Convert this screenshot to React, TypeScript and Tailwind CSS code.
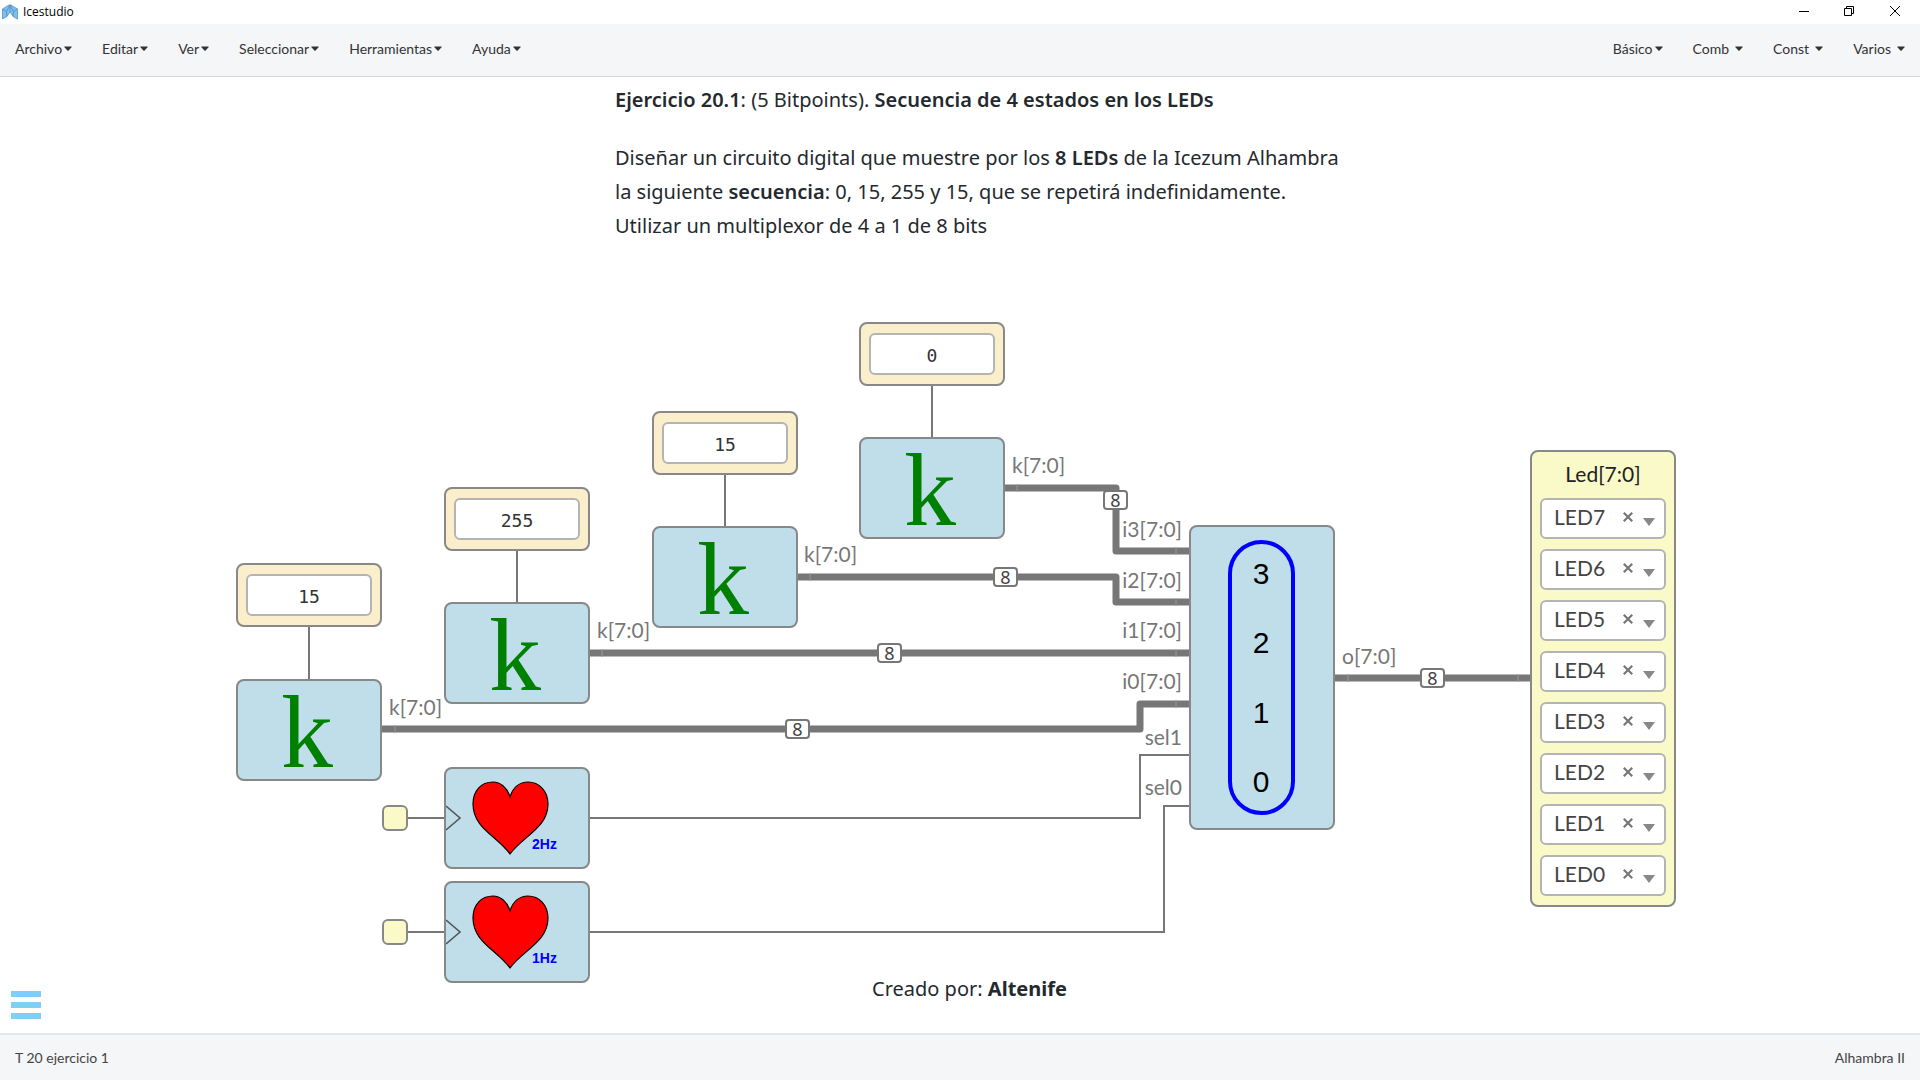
import React from "react";

const wireColor = "#777777";

function Caret({ spaced = false }: { spaced?: boolean }) {
  return (
    <svg viewBox="0 0 8 5" className={spaced ? "ml-[6px] h-[5px] w-2" : "ml-[2px] h-[5px] w-2"} aria-hidden="true">
      <path d="M0.6 0.4h6.8q0.6 0.2 0.2 0.8L4.6 4.5q-0.6 0.5-1.2 0L0.4 1.2q-0.4-0.6 0.2-0.8z" fill="#333" />
    </svg>
  );
}

function MenuButton({ label, spaced }: { label: string; spaced?: boolean }) {
  return (
    <button type="button" className="flex h-full items-center px-[15px] text-sm text-[#333]">
      {label}
      <Caret spaced={spaced} />
    </button>
  );
}

function Logo() {
  return (
    <svg viewBox="0 0 16 16" className="h-4 w-4" aria-hidden="true">
      <path d="M0.5 5 7 1h2l6.5 4v10L11 12.4 8 7.8 5 12.4 0.5 15z" fill="#7cc0ee" stroke="#5a94bd" strokeWidth="0.8" strokeLinejoin="round" />
      <path d="M8 1v7M0.5 5 4.5 7.6 5 12.4M15.5 5 11.5 7.6 11 12.4M4.5 7.6 8 1l3.5 6.6" fill="none" stroke="#4a86b4" strokeWidth="0.7" />
    </svg>
  );
}

function TitleBar() {
  return (
    <header className="flex h-6 shrink-0 items-center justify-between bg-white pl-[2px]">
      <div className="flex items-center gap-[5px]">
        <Logo />
        <h1 className="font-['Open_Sans',sans-serif] text-xs text-black">Icestudio</h1>
      </div>
      <div className="flex h-full pr-px pb-[2px]">
        <button type="button" aria-label="Minimizar" className="flex w-[45px] items-center justify-center">
          <svg viewBox="0 0 10 10" className="h-[10px] w-[10px]"><path d="M0 5.5h10" stroke="#000" /></svg>
        </button>
        <button type="button" aria-label="Restaurar" className="flex w-[45px] items-center justify-center">
          <svg viewBox="0 0 10 10" className="h-[10px] w-[10px]"><path d="M0.5 2.5h7v7h-7zM2.5 2.5v-2h7v7h-2" fill="none" stroke="#000" /></svg>
        </button>
        <button type="button" aria-label="Cerrar" className="flex w-12 items-center justify-center">
          <svg viewBox="0 0 10 10" className="h-[10px] w-[10px]"><path d="M0 0l10 10M10 0L0 10" stroke="#000" /></svg>
        </button>
      </div>
    </header>
  );
}

function NavBar() {
  return (
    <nav className="flex h-[53px] shrink-0 justify-between border-b border-[#d3d9de] bg-[#f5f6f8] pb-[3px]">
      <div className="flex">
        {["Archivo", "Editar", "Ver", "Seleccionar", "Herramientas", "Ayuda"].map((m) => (
          <MenuButton key={m} label={m} />
        ))}
      </div>
      <div className="flex">
        <MenuButton label="Básico" />
        <MenuButton label="Comb" spaced />
        <MenuButton label="Const" spaced />
        <MenuButton label="Varios" spaced />
      </div>
    </nav>
  );
}

type Place = { x: number; y: number };

function at({ x, y }: Place) {
  return { left: x, top: y };
}

function ConstantNode({ x, y, value }: Place & { value: string }) {
  return (
    <div style={at({ x, y })} className="absolute h-16 w-[146px] rounded-lg border-2 border-[#888] bg-[#fbeecb] px-2 py-[9px]">
      <input
        aria-label="Valor constante"
        defaultValue={value}
        className="h-[42px] w-full rounded-md border-2 border-[#b4b4b4] bg-white pt-[2px] text-center font-['DejaVu_Sans_Mono',monospace] text-lg text-[#333]"
      />
    </div>
  );
}

function Block({ x, y, children }: Place & { children: React.ReactNode }) {
  return (
    <div style={at({ x, y })} className="absolute h-[102px] w-[146px] rounded-lg border-2 border-[#888] bg-[#c0deea]">
      {children}
    </div>
  );
}

function KBlock({ x, y }: Place) {
  return (
    <Block x={x} y={y}>
      <span className="flex h-full items-center justify-center pt-1 pr-1 font-['Liberation_Serif',serif] text-[104px] leading-none text-[#008000]">k</span>
    </Block>
  );
}

function HeartBlock({ x, y, rate }: Place & { rate: string }) {
  return (
    <Block x={x} y={y}>
      <svg viewBox="0 0 142 98" className="h-full w-full font-['Liberation_Sans',sans-serif]">
        <path d="M0 37l14 12L0 61" fill="none" stroke="#555" strokeWidth="1.6" />
        <path
          d="M64 28C61 18 54 13 47 13C35 13 27 22 27 35C27 59 51 67 64 85C77 67 102 59 102 35C102 22 93 13 82 13C74 13 67 18 64 28z"
          fill="#f00"
          stroke="#000"
          strokeWidth="1.2"
        />
        <text x="86" y="80" fontSize="14" fontWeight="bold" fill="#00f">{rate}</text>
      </svg>
    </Block>
  );
}

function MuxBlock({ x, y }: Place) {
  return (
    <div style={at({ x, y })} className="absolute flex h-[305px] w-[146px] justify-center rounded-lg border-2 border-[#888] bg-[#c0deea] py-[13px] pr-[2px]">
      <div className="flex w-[67px] flex-col items-center justify-between rounded-full border-4 border-[#00f] pt-3 pb-[11px] font-['Liberation_Sans',sans-serif] text-3xl leading-9 text-black">
        {["3", "2", "1", "0"].map((n) => (
          <span key={n}>{n}</span>
        ))}
      </div>
    </div>
  );
}

function LedSelect({ name }: { name: string }) {
  return (
    <div className="relative h-[41px] rounded-md border-2 border-[#b4b4b4] bg-white">
      <select aria-label={"Pin " + name} defaultValue={name} className="h-[33px] w-full appearance-none bg-transparent pl-3 text-[21px] leading-8 text-[#444]">
        <option>{name}</option>
      </select>
      <button type="button" aria-label={"Quitar " + name} className="absolute top-3 right-[31px]">
        <svg viewBox="0 0 10 10" className="h-[10px] w-[10px]"><path d="M0.8 0.8l8.4 8.4M9.2 0.8L0.8 9.2" stroke="#777" strokeWidth="2.2" /></svg>
      </button>
      <svg viewBox="0 0 12 8" className="pointer-events-none absolute top-[18px] right-[9px] h-2 w-3"><path d="M0 0h12L6 8z" fill="#888" /></svg>
    </div>
  );
}

function LedNode({ x, y }: Place) {
  return (
    <div style={at({ x, y })} className="absolute flex w-[146px] flex-col gap-[10px] rounded-lg border-2 border-[#888] bg-[#fafac8] px-2 pb-[9px]">
      <h2 className="-mb-[10px] pt-[6px] pb-2 text-center text-[21px] leading-8 text-[#222]">Led[7:0]</h2>
      {[7, 6, 5, 4, 3, 2, 1, 0].map((n) => (
        <LedSelect key={n} name={"LED" + n} />
      ))}
    </div>
  );
}

const buses = [
  "M1005 411H1116V474H1190",
  "M798 500H1116V525H1190",
  "M590 576H1190",
  "M382 652H1140V627H1190",
  "M1335 601H1531",
];

const thinWires = [
  "M590 741H1140V678H1190",
  "M590 855H1164V729H1190",
  "M408 741H445",
  "M408 855H445",
  "M309 549V603",
  "M517 473V526",
  "M725 397V450",
  "M932 307V361",
];

const joints = "M1017 407v8M1176 470v8M810 496v8M1176 521v8M602 572v8M1176 572v8M395 648v8M1176 623v8M1348 597v8M1518 597v8";

const portLabels = [
  { x: 1012, y: 396, t: "k[7:0]" },
  { x: 804, y: 485, t: "k[7:0]" },
  { x: 597, y: 561, t: "k[7:0]" },
  { x: 389, y: 638, t: "k[7:0]" },
  { x: 1342, y: 587, t: "o[7:0]" },
  { x: 1182, y: 460, t: "i3[7:0]", end: true },
  { x: 1182, y: 511, t: "i2[7:0]", end: true },
  { x: 1182, y: 561, t: "i1[7:0]", end: true },
  { x: 1182, y: 612, t: "i0[7:0]", end: true },
  { x: 1182, y: 668, t: "sel1", end: true },
  { x: 1182, y: 718, t: "sel0", end: true },
];

const busSizes = [
  { x: 1103, y: 413 },
  { x: 993, y: 490 },
  { x: 877, y: 566 },
  { x: 785, y: 642 },
  { x: 1420, y: 591 },
];

function Wires() {
  return (
    <svg className="absolute inset-0 h-full w-full" fill="none" aria-hidden="true">
      {buses.map((d) => (
        <path key={d} d={d} stroke={wireColor} strokeWidth="7" strokeLinejoin="round" />
      ))}
      <path d={joints} stroke="#999" />
      {thinWires.map((d) => (
        <path key={d} d={d} stroke={wireColor} strokeWidth="2" />
      ))}
    </svg>
  );
}

function PortLabels() {
  return (
    <svg className="pointer-events-none absolute inset-0 h-full w-full">
      {portLabels.map((l) => (
        <text key={l.x + "-" + l.y} x={l.x} y={l.y} fontSize="21" fill="#777" textAnchor={l.end ? "end" : "start"}>
          {l.t}
        </text>
      ))}
    </svg>
  );
}

function Canvas() {
  return (
    <main className="relative min-h-[956px] flex-1 overflow-hidden bg-white">
      <Wires />
      <PortLabels />
      {busSizes.map((p) => (
        <span key={p.x} style={at(p)} className="absolute flex h-5 w-[25px] items-center justify-center rounded-sm border-2 border-[#777] bg-white font-['Noto_Sans',sans-serif] text-lg leading-none text-[#444]">
          8
        </span>
      ))}

      <article style={at({ x: 615, y: 6 })} className="absolute font-['Noto_Sans',sans-serif] text-xl leading-[34px] whitespace-nowrap text-[#24292e]">
        <p className="mb-6">
          <strong className="font-semibold">Ejercicio 20.1</strong>: (5 Bitpoints). <strong className="font-semibold">Secuencia de 4 estados en los LEDs</strong>
        </p>
        <p>
          Diseñar un circuito digital que muestre por los <strong className="font-semibold">8 LEDs</strong> de la Icezum Alhambra
          <br />
          la siguiente <strong className="font-semibold">secuencia</strong>: 0, 15, 255 y 15, que se repetirá indefinidamente.
          <br />
          Utilizar un multiplexor de 4 a 1 de 8 bits
        </p>
      </article>

      <ConstantNode x={859} y={245} value="0" />
      <ConstantNode x={652} y={334} value="15" />
      <ConstantNode x={444} y={410} value="255" />
      <ConstantNode x={236} y={486} value="15" />
      <KBlock x={859} y={360} />
      <KBlock x={652} y={449} />
      <KBlock x={444} y={525} />
      <KBlock x={236} y={602} />

      <span style={at({ x: 382, y: 728 })} className="absolute h-[26px] w-[26px] rounded-md border-2 border-[#888] bg-[#fafac8]" />
      <span style={at({ x: 382, y: 842 })} className="absolute h-[26px] w-[26px] rounded-md border-2 border-[#888] bg-[#fafac8]" />
      <HeartBlock x={444} y={690} rate="2Hz" />
      <HeartBlock x={444} y={804} rate="1Hz" />
      <MuxBlock x={1189} y={448} />
      <LedNode x={1530} y={373} />

      <p style={at({ x: 872, y: 895 })} className="absolute font-['Noto_Sans',sans-serif] text-xl leading-[34px] whitespace-nowrap text-[#24292e]">
        Creado por: <strong className="font-bold">Altenife</strong>
      </p>

      <button type="button" aria-label="Mostrar panel" className="absolute bottom-[14px] left-[11px] flex w-[30px] flex-col gap-[5px]">
        <span className="h-[6px] bg-[#7ecef6]" />
        <span className="h-[6px] bg-[#7ecef6]" />
        <span className="h-[6px] bg-[#7ecef6]" />
      </button>
    </main>
  );
}

export default function App() {
  return (
    <div className="flex min-h-screen flex-col bg-white font-['Lato',sans-serif]">
      <TitleBar />
      <NavBar />
      <Canvas />
      <footer className="flex h-[47px] shrink-0 items-center justify-between border-t-2 border-[#e4e7ea] bg-[#f5f6f8] px-[15px] text-sm text-[#444]">
        <span>T 20 ejercicio 1</span>
        <span>Alhambra II</span>
      </footer>
    </div>
  );
}
